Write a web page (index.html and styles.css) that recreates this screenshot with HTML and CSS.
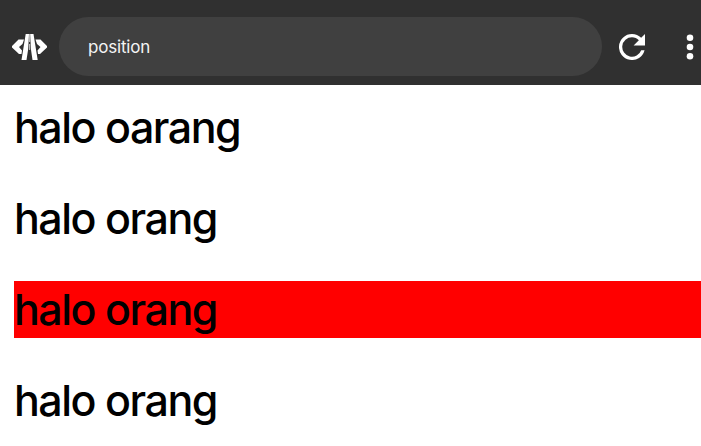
FILE: index.html
```html
<!DOCTYPE html>
<html lang="id">
<head>
<meta charset="utf-8">
<title>position</title>
<link rel="stylesheet" href="styles.css">
</head>
<body>
<header class="toolbar">
  <svg class="logo" viewBox="0 0 36 28" fill="#fff">
    <path d="M6.500 6.500H12L10.500 11L7 14L10 17.500L9.500 21H7L0 14.500V13ZM28.500 6.500H23.500L25 11L28.500 14L25.500 17.500L26 21H28L35 14.500V13Z"/>
    <path d="M13.700 1H17L16.200 16L14.500 27H9.500ZM18.200 1H21.500L25.700 27H20.500L18.900 16Z"/>
    <path d="M17 1H18.200V9H17ZM17 11H18.200V17H17Z" opacity=".65"/>
  </svg>
  <div class="address"><span class="title">position</span></div>
  <svg class="reload" viewBox="4 4 16 16" fill="#fff"><path d="M17.650 6.350A7.960 7.960 0 0 0 12 4a8 8 0 1 0 7.730 10h-2.080A6 6 0 1 1 12 6c1.660 0 3.140.69 4.220 1.780L13 11h7V4z"/></svg>
  <svg class="menu" viewBox="0 0 8 26" fill="#fff"><circle cx="4" cy="3.700" r="3.300"/><circle cx="4" cy="13" r="3.300"/><circle cx="4" cy="22.300" r="3.300"/></svg>
</header>
<main class="content">
  <p>halo oarang</p>
  <p>halo orang</p>
  <p class="highlight">halo orang</p>
  <p>halo orang</p>
</main>
</body>
</html>
```
FILE: styles.css
```css
body { margin: 0; background: #fff; overflow: hidden; }
.toolbar { display: flex; align-items: center; box-sizing: border-box; height: 85px; padding: 8px 0 0 12px; background: #303030; }
.logo { width: 36px; height: 28px; flex: none; }
.address { box-sizing: border-box; width: 543px; height: 59px; margin-left: 11px; padding: 1px 0 0 29px; border-radius: 30px; background: #404040; color: #f4f4f4; font: 400 17px/59px Inter, sans-serif; letter-spacing: -.2px; flex: none; }
.reload { width: 26px; height: 26px; margin-left: 16.500px; flex: none; }
.menu { width: 8px; height: 26px; margin-left: 41.500px; flex: none; }
.content { padding: 14px 0 0 14px; color: #000; font: 500 43px/57px Inter, sans-serif; letter-spacing: -1.5px; }
.content p { margin: 0 0 34px; }
.content .highlight { background: #f00; }
```
